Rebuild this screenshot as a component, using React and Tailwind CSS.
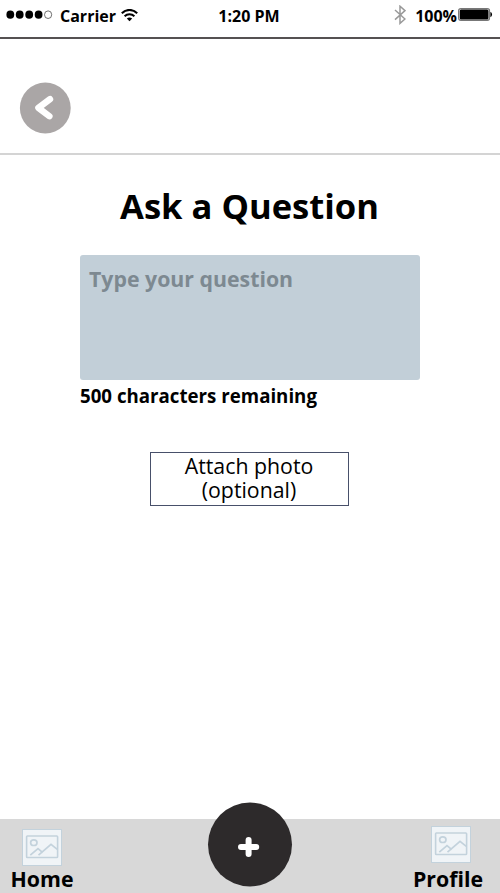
import React from "react";

function StatusBar() {
  return (
    <div className="flex h-[39px] items-start border-b-2 border-[#555152] text-[16px] leading-[22px] font-bold">
      <div className="flex w-[200px] pt-[5px] pl-[6px]">
        <svg className="mt-[5px] h-[10px] w-[47px]" viewBox="0 0 47 10">
          {[4.3, 13.7, 23.2, 32.6].map((x) => (
            <ellipse key={x} cx={x} cy="4.7" rx="3.9" ry="4.1" fill="#000" />
          ))}
          <ellipse cx="42.1" cy="4.7" rx="3.6" ry="3.8" fill="#fff" stroke="#333" strokeWidth="0.7" />
        </svg>
        <span className="ml-[7px] w-[56px] whitespace-nowrap">Carrier</span>
        <svg className="mt-[4px] ml-[5px] h-[13px] w-[17px]" viewBox="0 0 17 13" fill="none" stroke="#000" strokeWidth="2">
          <path d="M0.8 4.2C5 -0.2 12 -0.2 16.2 4.2" />
          <path d="M3.6 7.2C6.3 4.5 10.7 4.5 13.4 7.2" />
          <path d="M5.8 9.6C7.4 8.2 9.6 8.2 11.2 9.6L8.5 12.2Z" fill="#000" stroke="none" />
        </svg>
      </div>
      <div className="w-[98px] pt-[5px] text-center whitespace-nowrap">1:20 PM</div>
      <div className="flex flex-1 justify-end pt-[5px] pr-[7px]">
        <svg className="mr-[9px] h-[20px] w-[12px]" viewBox="0 0 12 20" fill="none" stroke="#999" strokeWidth="1.5">
          <path d="M1 5L11 14L6 18.4V1.2L11 5.6L1 14.6" />
        </svg>
        <span className="whitespace-nowrap">100%</span>
        <svg className="mt-[3px] ml-px h-[13px] w-[35px]" viewBox="0 0 35 13">
          <rect x="0.6" y="0.6" width="31" height="11.8" rx="2.3" fill="#fff" stroke="#777" strokeWidth="1.1" />
          <rect x="1.7" y="1.6" width="28.8" height="9.8" rx="1.5" fill="#000" />
          <path d="M32.4 4C34.6 4.5 34.6 8.5 32.4 9Z" fill="#000" />
        </svg>
      </div>
    </div>
  );
}

function PictureIcon() {
  return (
    <svg className="h-[37px] w-[40px] shrink-0" viewBox="0 0 40 37" fill="none" stroke="#c3d2dc">
      <rect x="0.5" y="0.5" width="39" height="36" fill="#f0f4f7" strokeWidth="1" />
      <rect x="4.6" y="7" width="31" height="21.5" rx="0.8" strokeWidth="1.6" />
      <ellipse cx="11.8" cy="13.7" rx="3.2" ry="2.8" strokeWidth="1.7" />
      <path d="M8.3 26.2L16 19.5L20.8 23.6M16.5 26.2L29 15.4L35.3 20.4" strokeWidth="1.7" />
    </svg>
  );
}

export default function App() {
  return (
    <div className="flex h-[893px] w-[500px] flex-col overflow-hidden bg-white font-['Open_Sans','Noto_Sans',sans-serif] text-black">
      <StatusBar />
      <header className="h-[116px] border-b-2 border-[#d4d4d4] pt-[43px] pl-[19px]">
        <button className="block" aria-label="Back">
          <svg className="h-[52px] w-[52px]" viewBox="0 0 52 52">
            <circle cx="26.3" cy="26" r="25.4" fill="#aaa6a6" />
            <path d="M31 17.1L19.4 25.9L30.4 34.2" fill="none" stroke="#fff" strokeWidth="6.4" strokeLinecap="round" strokeLinejoin="round" />
          </svg>
        </button>
      </header>
      <main className="flex flex-1 flex-col items-center pt-[29px]">
        <h1 className="mr-px h-[71px] text-[34.6px] leading-[44px] font-bold whitespace-nowrap">Ask a Question</h1>
        <textarea
          className="block h-[125px] w-[340px] resize-none rounded-[3px] bg-[#c2cfd8] px-[9px] py-[9px] text-[21.3px] leading-[30px] font-bold outline-none placeholder:text-[#7d8991] placeholder:opacity-100"
          placeholder="Type your question"
        />
        <p className="mt-[3px] w-[340px] text-[18.7px] leading-[26px] font-bold">500 characters remaining</p>
        <button className="mt-[43px] mr-px h-[54px] w-[199px] border border-[#48506a] pr-px pb-[2px] text-[21.3px] leading-[24px]">
          Attach photo
          <br />
          (optional)
        </button>
      </main>
      <footer className="relative flex h-[74px] justify-between bg-[#d8d8d8] text-[21.3px] leading-[24px] font-bold">
        <div className="flex w-[84px] flex-col items-center pt-[10px]">
          <PictureIcon />
          <span className="mt-px">Home</span>
        </div>
        <button className="absolute -top-[17px] left-[207px]" aria-label="Add question">
          <svg className="h-[86px] w-[86px]" viewBox="0 0 86 86">
            <circle cx="43" cy="42.5" r="42" fill="#2d2a2b" />
            <path d="M34 45H49.2M41.6 38V52" stroke="#fff" strokeWidth="6" strokeLinecap="round" />
          </svg>
        </button>
        <div className="flex w-[104px] flex-col items-center pt-[7px]">
          <div className="pl-[5px]">
            <PictureIcon />
          </div>
          <span className="mt-[4px]">Profile</span>
        </div>
      </footer>
    </div>
  );
}
